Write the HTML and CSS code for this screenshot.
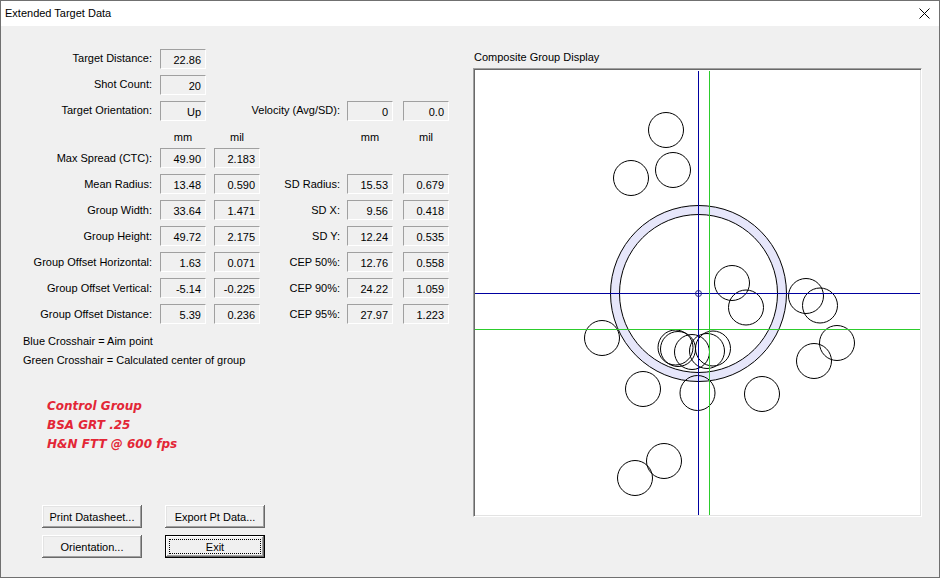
FILE: index.html
```html
<!DOCTYPE html>
<html>
<head>
<meta charset="utf-8">
<title>Extended Target Data</title>
<link rel="stylesheet" href="styles.css">
</head>
<body>
<div class="window">
  <div class="titlebar">
    <span class="title">Extended Target Data</span>
    <svg class="close" width="11" height="11" viewBox="0 0 11 11"><path d="M0.5 0.5 L10.5 10.5 M10.5 0.5 L0.5 10.5" stroke="#000" stroke-width="1" fill="none"/></svg>
  </div>
  <div class="client">
    <div class="left">
      <div class="stats">
        <div class="lbl top c1">Target Distance:</div><div class="fld c2">22.86</div>
        <div class="lbl top c1">Shot Count:</div><div class="fld c2">20</div>
        <div class="lbl top c1">Target Orientation:</div><div class="fld c2">Up</div>
        <div class="lbl top r c34">Velocity (Avg/SD):</div><div class="fld c5">0</div><div class="fld c6">0.0</div>

        <div class="hdr c2">mm</div><div class="hdr c3">mil</div><div class="hdr c5">mm</div><div class="hdr c6">mil</div>

        <div class="lbl c1">Max Spread (CTC):</div><div class="fld c2">49.90</div><div class="fld c3">2.183</div>
        <div class="lbl c1">Mean Radius:</div><div class="fld c2">13.48</div><div class="fld c3">0.590</div>
        <div class="lbl r c4">SD Radius:</div><div class="fld c5">15.53</div><div class="fld c6">0.679</div>
        <div class="lbl c1">Group Width:</div><div class="fld c2">33.64</div><div class="fld c3">1.471</div>
        <div class="lbl r c4">SD X:</div><div class="fld c5">9.56</div><div class="fld c6">0.418</div>
        <div class="lbl c1">Group Height:</div><div class="fld c2">49.72</div><div class="fld c3">2.175</div>
        <div class="lbl r c4">SD Y:</div><div class="fld c5">12.24</div><div class="fld c6">0.535</div>
        <div class="lbl c1">Group Offset Horizontal:</div><div class="fld c2">1.63</div><div class="fld c3">0.071</div>
        <div class="lbl r c4">CEP 50%:</div><div class="fld c5">12.76</div><div class="fld c6">0.558</div>
        <div class="lbl c1">Group Offset Vertical:</div><div class="fld c2">-5.14</div><div class="fld c3">-0.225</div>
        <div class="lbl r c4">CEP 90%:</div><div class="fld c5">24.22</div><div class="fld c6">1.059</div>
        <div class="lbl c1">Group Offset Distance:</div><div class="fld c2">5.39</div><div class="fld c3">0.236</div>
        <div class="lbl r c4">CEP 95%:</div><div class="fld c5">27.97</div><div class="fld c6">1.223</div>
      </div>

      <div class="legend">
        <div>Blue Crosshair = Aim point</div>
        <div>Green Crosshair = Calculated center of group</div>
      </div>

      <div class="notes">
        <div>Control Group</div>
        <div>BSA GRT .25</div>
        <div>H&amp;N FTT @ 600 fps</div>
      </div>

      <div class="buttons">
        <button class="btn">Print Datasheet...</button>
        <button class="btn">Export Pt Data...</button>
        <button class="btn">Orientation...</button>
        <button class="btn default"><span class="focus">Exit</span></button>
      </div>
    </div>

    <div class="right">
      <div class="caption">Composite Group Display</div>
      <div class="display">
        <svg width="445" height="445" viewBox="475 70 445 445">
          <circle cx="698.5" cy="293.5" r="83.5" fill="none" stroke="#e6e6fa" stroke-width="9"/>
          <circle cx="698.5" cy="293.5" r="88" fill="none" stroke="#000" stroke-width="1"/>
          <circle cx="698.5" cy="293.5" r="79" fill="none" stroke="#000" stroke-width="1"/>
          <g fill="none" stroke="#000" stroke-width="1">
            <circle cx="666" cy="130" r="17.5"/>
            <circle cx="673" cy="170" r="17.5"/>
            <circle cx="631" cy="178" r="17.5"/>
            <circle cx="732" cy="283" r="17.5"/>
            <circle cx="746" cy="307.5" r="17.5"/>
            <circle cx="806" cy="296" r="17.5"/>
            <circle cx="820" cy="305.5" r="17.5"/>
            <circle cx="837" cy="343" r="17.5"/>
            <circle cx="814" cy="361" r="17.5"/>
            <circle cx="602" cy="338" r="17.5"/>
            <circle cx="643" cy="389" r="17.5"/>
            <circle cx="697.5" cy="393" r="17.5"/>
            <circle cx="762" cy="394" r="17.5"/>
            <circle cx="675.5" cy="347.5" r="17.5"/>
            <circle cx="678" cy="349" r="17.5"/>
            <circle cx="692" cy="352" r="17.5"/>
            <circle cx="707" cy="351" r="17.5"/>
            <circle cx="713" cy="348.5" r="17.5"/>
            <circle cx="635" cy="478" r="17.5"/>
            <circle cx="664" cy="461" r="17.5"/>
          </g>
          <rect x="475" y="293" width="445" height="1" fill="#0000a0"/>
          <rect x="475" y="329" width="445" height="1" fill="#2ccc2c"/>
          <rect x="709" y="71" width="1" height="444" fill="#2ccc2c"/>
          <rect x="698" y="71" width="1" height="444" fill="#0000a0"/>
          <circle cx="698.5" cy="293.5" r="3" fill="none" stroke="#202080" stroke-width="1"/>
        </svg>
      </div>
    </div>
  </div>
</div>
</body>
</html>
```
FILE: styles.css
```css
html, body {
  margin: 0;
  padding: 0;
  background: #f0f0f0;
}

body {
  font-family: "Liberation Sans", Arial, sans-serif;
  font-size: 11px;
  color: #000;
}

.window {
  width: 940px;
  height: 578px;
  box-sizing: border-box;
  border: 1px solid #707070;
  display: flex;
  flex-direction: column;
  background: #f0f0f0;
  overflow: hidden;
}

.titlebar {
  flex: none;
  height: 25px;
  background: #fff;
  display: flex;
  align-items: center;
  justify-content: space-between;
  padding-left: 4px;
  padding-right: 9px;
}

.title {
  font-size: 11px;
  line-height: 25px;
}

.close {
  display: block;
}

.client {
  flex: 1;
  display: flex;
}

.left {
  width: 472px;
  flex: none;
  display: flex;
  flex-direction: column;
}

.stats {
  margin-top: 23px;
  display: grid;
  grid-template-columns: 159px 54px 46px 87px 56px 46px;
  grid-template-rows: 26px 26px 26px 21px 26px 26px 26px 26px 26px 26px 20px;
}

.c1 { grid-column: 1; }
.c2 { grid-column: 2; }
.c3 { grid-column: 3; }
.c4 { grid-column: 4; }
.c34 { grid-column: 3 / 5; }
.c5 { grid-column: 5; }
.c6 { grid-column: 6; }

.lbl {
  text-align: right;
  padding-right: 8px;
  line-height: 20px;
  white-space: nowrap;
}

.lbl.top {
  line-height: 18px;
}

.lbl.r {
  padding-right: 7px;
}

.fld {
  width: 46px;
  height: 20px;
  box-sizing: border-box;
  border: 1px solid;
  border-color: #a0a0a0 #ffffff #ffffff #a0a0a0;
  padding: 2px 4px 0 0;
  line-height: 16px;
  text-align: right;
  white-space: nowrap;
}

.hdr {
  width: 46px;
  text-align: center;
  line-height: 21px;
}

.legend {
  margin-top: 8px;
  padding-left: 22px;
  line-height: 19px;
}

.notes {
  margin-top: 27px;
  padding-left: 46px;
  font-family: "DejaVu Sans", sans-serif;
  font-weight: bold;
  font-style: oblique;
  font-size: 12px;
  line-height: 19px;
  color: #e32636;
}

.buttons {
  margin-top: 51px;
  padding-left: 41px;
  display: grid;
  grid-template-columns: 100px 100px;
  column-gap: 23px;
  row-gap: 7px;
}

.btn {
  -webkit-appearance: none;
  appearance: none;
  margin: 0;
  padding: 0;
  height: 23px;
  box-sizing: border-box;
  border: none;
  background: #f0f0f0;
  color: #000;
  font-family: "Liberation Sans", Arial, sans-serif;
  font-size: 11px;
  display: flex;
  align-items: center;
  justify-content: center;
  box-shadow: inset -1px -1px #696969, inset 1px 1px #ffffff, inset -2px -2px #a0a0a0, inset 2px 2px #e3e3e3;
}

.btn.default {
  border: 1px solid #000;
  align-items: stretch;
  box-shadow: inset -1px -1px #696969, inset 1px 1px #ffffff, inset -2px -2px #a0a0a0;
}

.focus {
  flex: 1;
  margin: 3px;
  border: 1px dotted #000;
  display: flex;
  align-items: center;
  justify-content: center;
}

.right {
  flex: none;
  display: flex;
  flex-direction: column;
}

.caption {
  margin-top: 25px;
  padding-left: 1px;
  line-height: 13px;
}

.display {
  margin-top: 4px;
  width: 449px;
  height: 449px;
  box-sizing: border-box;
  border: 1px solid;
  border-color: #a0a0a0 #ffffff #ffffff #a0a0a0;
  padding: 1px;
  background: #fff;
  box-shadow: inset 1px 1px #696969, inset -1px -1px #e3e3e3;
}

.display svg {
  display: block;
}
```
